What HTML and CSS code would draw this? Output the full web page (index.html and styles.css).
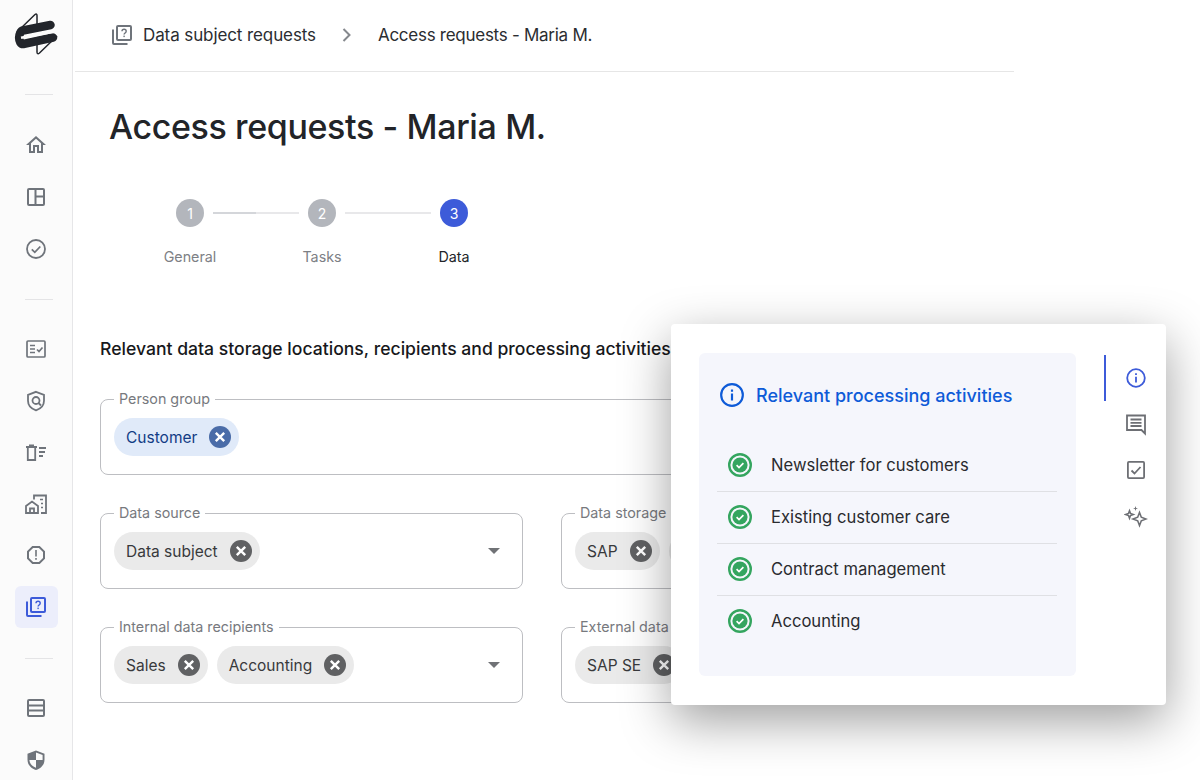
FILE: index.html
```html
<!DOCTYPE html>
<html>
<head>
	<meta charset="UTF-8">
	<title>Access requests - Maria M.</title>
	<link rel="stylesheet" href="styles.css">
</head>
<body>
	<svg class="sprite" width="0" height="0">
		<symbol id="quiz" viewBox="0 0 24 24">
			<path d="M3 6.5V20a1 1 0 0 0 1 1h13.5" fill="none" stroke="currentColor" stroke-width="2"/>
			<rect x="7" y="3" width="14" height="14" rx="1" fill="none" stroke="currentColor" stroke-width="2"/>
			<path d="M12 8.2c0-2.6 4.2-2.6 4.2 0 0 1.8-2.1 1.7-2.1 3.4" fill="none" stroke="currentColor" stroke-width="1.4"/>
			<rect x="13.4" y="12.6" width="1.4" height="1.5" fill="currentColor"/>
		</symbol>
		<symbol id="close" viewBox="0 0 22 22">
			<circle cx="11" cy="11" r="11" fill="currentColor"/>
			<path d="M6.8 6.8l8.4 8.4M15.2 6.8l-8.4 8.4" stroke="#fff" stroke-width="2.4"/>
		</symbol>
		<symbol id="done" viewBox="0 0 24 24">
			<circle cx="12" cy="12" r="10.8" fill="none" stroke="#34a55f" stroke-width="2.4"/>
			<circle cx="12" cy="12" r="7.6" fill="#34a55f"/>
			<path d="M8.6 12.2l2.4 2.3 4.4-4.4" fill="none" stroke="#fff" stroke-width="1.7"/>
		</symbol>
	</svg>

	<div class="page">
		<aside class="sidebar">
			<svg class="logo" width="44" height="44" viewBox="14 13 44 44">
				<path d="M35 14.500L17 32M35 14.500c1.200-1 2-.5 2 1V24M37 41V52c0 1.800 1 2.200 2.500 1L57 36" fill="none" stroke="#22252b" stroke-width="1.500"/>
				<path d="M50.500 25L23 30.500c-5 1-5.500 13.800.5 13.500L53 37.500" fill="none" stroke="#22252b" stroke-width="8.500" stroke-linecap="round"/>
				<path d="M21 37.800L59 30.800" stroke="#fbfbfb" stroke-width="2.600"/>
			</svg>

			<hr class="side-rule">
			<nav class="side-group">
				<a class="side-item"><svg width="24" height="24" viewBox="0 0 24 24" fill="currentColor"><path d="M12 5.690l5 4.500V18h-2v-6H9v6H7v-7.810l5-4.500M12 3L2 12h3v8h6v-6h2v6h6v-8h3L12 3z"/></svg></a>
				<a class="side-item"><svg width="24" height="24" viewBox="0 0 24 24" fill="none" stroke="currentColor" stroke-width="2"><rect x="4" y="4" width="16" height="16" rx="1"/><path d="M11.500 4v16M11.500 11.500H20"/></svg></a>
				<a class="side-item"><svg width="24" height="24" viewBox="0 0 24 24" fill="none" stroke="currentColor" stroke-width="1.800"><circle cx="12" cy="12" r="9"/><path d="M7.800 12.300l3 3 5.500-5.800"/></svg></a>
			</nav>

			<hr class="side-rule">
			<nav class="side-group tight">
				<a class="side-item"><svg width="24" height="24" viewBox="0 0 24 24" fill="none" stroke="currentColor" stroke-width="1.700"><rect x="3" y="4" width="18" height="16" rx="1"/><path d="M6 8.500h5M6 12h5M6 15.500h5M13 12.500l2 2 3.500-4"/></svg></a>
				<a class="side-item"><svg width="24" height="24" viewBox="0 0 24 24" fill="none" stroke="currentColor" stroke-width="1.800"><path d="M12 2.800l8 3v6c0 4.800-3.200 8-8 9.600-4.800-1.600-8-4.800-8-9.600v-6z"/><circle cx="12" cy="11.500" r="3.500"/><path d="M14.500 14l2.500 2.500"/></svg></a>
				<a class="side-item"><svg width="24" height="24" viewBox="0 0 24 24" fill="none" stroke="currentColor" stroke-width="1.800"><path d="M2 7h11M5 5.500h5M3.800 7v13h7.400V7M15 8h7M15 12h6M15 16h4"/></svg></a>
				<a class="side-item"><svg width="24" height="24" viewBox="0 0 24 24" fill="none" stroke="currentColor" stroke-width="1.800"><path d="M2 21V14l6-4.500 6 4.500v7zM6 21v-4.500h4V21M10 7.500V3.500h12V21h-5"/><path d="M16 7.500h3M17 11.500h2M17 15.500h2" stroke-width="1.600"/></svg></a>
				<a class="side-item"><svg width="24" height="24" viewBox="0 0 24 24" fill="currentColor"><path d="M15.730 3H8.270L3 8.270v7.460L8.270 21h7.460L21 15.730V8.270L15.730 3zM19 14.900L14.900 19H9.100L5 14.900V9.100L9.100 5h5.800L19 9.100v5.800z"/><rect x="11.200" y="7" width="1.600" height="6.500"/><rect x="11.200" y="15" width="1.600" height="1.800"/></svg></a>
				<a class="side-item active"><svg width="24" height="24"><use href="#quiz"/></svg></a>
			</nav>

			<hr class="side-rule">
			<nav class="side-group bottom">
				<a class="side-item"><svg width="24" height="24" viewBox="0 0 24 24" fill="none" stroke="currentColor" stroke-width="2"><rect x="4" y="4" width="16" height="16" rx="1"/><path d="M4 9.500h16M4 14.500h16"/></svg></a>
				<a class="side-item"><svg width="24" height="24" viewBox="0 0 24 24" fill="currentColor"><path d="M12 2.500l8.500 3.200v6c0 5-3.500 8.700-8.500 10.300-5-1.600-8.500-5.300-8.500-10.300v-6zM12 4.600v7.400H5.400c.3 3.800 3 6.500 6.600 7.800V12h6.600V7z"/></svg></a>
			</nav>
		</aside>

		<main class="main">
			<header class="crumbs">
				<svg class="crumb-icon" width="24" height="24"><use href="#quiz"/></svg>
				<span class="crumb-parent">Data subject requests</span>
				<svg class="crumb-sep" width="12" height="16" viewBox="0 0 12 16" fill="none" stroke="currentColor" stroke-width="2"><path d="M2.500 2l6 6-6 6"/></svg>
				<span class="crumb-current">Access requests - Maria M.</span>
			</header>

			<h1 class="title">Access requests - Maria M.</h1>

			<div class="stepper">
				<div class="step-track">
					<span class="step-dot">1</span>
					<span class="step-line half"></span>
					<span class="step-dot">2</span>
					<span class="step-line"></span>
					<span class="step-dot current">3</span>
				</div>
				<div class="step-labels">
					<span>General</span>
					<span>Tasks</span>
					<span class="current">Data</span>
				</div>
			</div>

			<h2 class="section-title">Relevant data storage locations, recipients and processing activities</h2>

			<div class="fields">
				<fieldset class="field wide">
					<legend>Person group</legend>
					<span class="chip blue">Customer <svg width="22" height="22"><use href="#close"/></svg></span>
				</fieldset>

				<fieldset class="field">
					<legend>Data source</legend>
					<span class="chip">Data subject <svg width="22" height="22"><use href="#close"/></svg></span>
					<span class="arrow"></span>
				</fieldset>
				<fieldset class="field">
					<legend>Data storage</legend>
					<span class="chip">SAP <svg width="22" height="22"><use href="#close"/></svg></span>
					<span class="chip">Cloud <svg width="22" height="22"><use href="#close"/></svg></span>
					<span class="arrow"></span>
				</fieldset>

				<fieldset class="field">
					<legend>Internal data recipients</legend>
					<span class="chip">Sales <svg width="22" height="22"><use href="#close"/></svg></span>
					<span class="chip">Accounting <svg width="22" height="22"><use href="#close"/></svg></span>
					<span class="arrow"></span>
				</fieldset>
				<fieldset class="field">
					<legend>External data recipients</legend>
					<span class="chip">SAP SE <svg width="22" height="22"><use href="#close"/></svg></span>
					<span class="arrow"></span>
				</fieldset>
			</div>
		</main>
	</div>

	<section class="popup">
		<div class="popup-panel">
			<div class="popup-head">
				<svg width="26" height="26" viewBox="0 0 24 24" fill="none" stroke="currentColor" stroke-width="2"><circle cx="12" cy="12" r="10"/><path d="M12 10.500V17M12 7v2"/></svg>
				<span>Relevant processing activities</span>
			</div>
			<ul class="activity-list">
				<li><svg width="24" height="24"><use href="#done"/></svg>Newsletter for customers</li>
				<li><svg width="24" height="24"><use href="#done"/></svg>Existing customer care</li>
				<li><svg width="24" height="24"><use href="#done"/></svg>Contract management</li>
				<li><svg width="24" height="24"><use href="#done"/></svg>Accounting</li>
			</ul>
		</div>
		<div class="popup-rail">
			<a class="rail-item active"><svg width="24" height="24" viewBox="0 0 24 24" fill="none" stroke="currentColor" stroke-width="1.800"><circle cx="12" cy="12" r="8.800"/><path d="M12 10.800V16.500M12 7.200V9"/></svg></a>
			<a class="rail-item"><svg width="24" height="24" viewBox="0 0 24 24" fill="none" stroke="currentColor" stroke-width="1.800"><path d="M3 3.500h18v18l-3.500-3.500H3z"/><path d="M6.500 7.500h11M6.500 10.800h11M6.500 14h11"/></svg></a>
			<a class="rail-item"><svg width="24" height="24" viewBox="0 0 24 24" fill="none" stroke="currentColor" stroke-width="1.800"><rect x="3.900" y="3.900" width="16.200" height="16.200" rx="1"/><path d="M7.500 12.500l3 3 6-6.500"/></svg></a>
			<a class="rail-item"><svg width="24" height="24" viewBox="0 0 24 24" fill="none" stroke="currentColor" stroke-width="1.600"><path d="M15.500 8.500l1.800 4.700 4.700 1.800-4.700 1.800-1.800 4.700-1.800-4.700L9 15l4.700-1.800z"/><path d="M5.500 6.800l1 2.700 2.700 1-2.700 1-1 2.700-1-2.700-2.700-1 2.700-1z"/><path d="M11.500 2l.6 1.900 1.900.6-1.900.6-.6 1.900-.6-1.900L9 4.500l1.900-.6z" fill="currentColor" stroke="none"/></svg></a>
		</div>
	</section>
</body>
</html>
```

FILE: styles.css
```css
body {
	margin: 0;
	background: #fff;
	color: #222428;
	font-family: Inter, "Liberation Sans", sans-serif;
	height: 780px;
	overflow: hidden;
}
.sprite {
	position: absolute;
}
.page {
	display: flex;
	height: 780px;
}

/* sidebar */
.sidebar {
	flex: 0 0 72px;
	background: #fbfbfb;
	border-right: 1px solid #e6e6e8;
	display: flex;
	flex-direction: column;
	align-items: center;
}
.logo {
	margin-top: 13px;
	margin-bottom: 37px;
	flex: none;
}
.side-rule {
	width: 28px;
	height: 1px;
	border: none;
	background: #e4e4e6;
	margin: 0 0 0 6px;
	flex: none;
}
.side-group {
	display: flex;
	flex-direction: column;
	gap: 10px;
	margin: 29px 0;
}
.side-group.tight {
	gap: 9.6px;
	margin: 28px 0 30px;
}
.side-group.bottom {
	margin-top: 28px;
}
.side-item {
	width: 43px;
	height: 42px;
	border-radius: 6px;
	display: flex;
	align-items: center;
	justify-content: center;
	color: #6f747b;
	flex: none;
}
.side-item.active {
	background: #eceefb;
	color: #3d5bd9;
}

/* main column */
.main {
	flex: 1;
	padding-left: 2px;
	min-width: 0;
}
.crumbs {
	width: 939px;
	height: 72px;
	border-bottom: 1px solid #e6e6e6;
	display: flex;
	align-items: center;
	padding: 0 0 1px 35px;
	box-sizing: border-box;
	font-size: 17px;
	color: #2b2d31;
}
.crumb-parent {
	letter-spacing: -0.1px;
}
.crumb-current {
	letter-spacing: -0.27px;
}
.crumb-icon {
	color: #6f747b;
	margin-right: 9px;
}
.crumb-sep {
	color: #85888d;
	margin: 0 25px;
}
.title {
	margin: 33px 0 0 34px;
	font-size: 34px;
	line-height: 44px;
	font-weight: 500;
	letter-spacing: -0.38px;
	color: #222428;
}
.stepper {
	margin-top: 50px;
}
.step-track {
	display: flex;
	align-items: center;
	margin-left: 101px;
}
.step-dot {
	width: 28px;
	height: 28px;
	border-radius: 50%;
	background: #b3b6bc;
	color: #fff;
	font-size: 14px;
	display: flex;
	align-items: center;
	justify-content: center;
	flex: none;
}
.step-dot.current {
	background: #3d5bd9;
}
.step-line {
	width: 86px;
	height: 2px;
	margin: 0 9px;
	background: #e8e8ea;
}
.step-line.half {
	background: linear-gradient(90deg, #d4d6da 50%, #e8e8ea 50%);
}
.step-labels {
	display: flex;
	margin: 21px 0 0 49px;
	font-size: 14.300px;
	line-height: 18px;
	color: #7d8085;
}
.step-labels span {
	width: 132px;
	text-align: center;
}
.step-labels .current {
	color: #222428;
}
.section-title {
	margin: 72px 0 0 25px;
	font-size: 17.600px;
	line-height: 22px;
	font-weight: 500;
	color: #17181b;
	white-space: nowrap;
}

/* form fields */
.fields {
	display: grid;
	grid-template-columns: 423px 423px;
	column-gap: 38px;
	row-gap: 29px;
	margin: 30px 0 0 25px;
}
.field {
	margin: 0;
	height: 85px;
	box-sizing: border-box;
	border: 1px solid #bdbec2;
	border-radius: 8px;
	padding: 0 13px 8px;
	display: flex;
	align-items: center;
	gap: 9px;
	min-width: 0;
}
.field.wide {
	grid-column: 1 / span 2;
}
.field legend {
	font-size: 14.300px;
	line-height: 18px;
	color: #77797e;
	padding: 0 5px;
	margin-left: 0;
}
.chip {
	display: inline-flex;
	align-items: center;
	gap: 12px;
	height: 38px;
	border-radius: 19px;
	padding: 0 8px 0 12px;
	background: #eaeaea;
	color: #38393c;
	font-size: 15.500px;
	white-space: nowrap;
	flex: none;
}
.chip svg {
	color: #606163;
}
.chip.blue {
	background: #e0eaf9;
	color: #123c85;
}
.chip.blue svg {
	color: #4a6ca8;
}
.arrow {
	margin-left: auto;
	margin-right: 9px;
	border-left: 6px solid transparent;
	border-right: 6px solid transparent;
	border-top: 6px solid #707276;
}

/* floating panel */
.popup {
	position: absolute;
	left: 671px;
	top: 324px;
	width: 495px;
	height: 381px;
	box-sizing: border-box;
	padding: 29px 0 29px 28px;
	background: #fff;
	border-radius: 4px;
	box-shadow: 0 16px 50px rgba(0, 0, 0, 0.38);
	display: flex;
}
.popup-panel {
	width: 377px;
	background: #f5f6fc;
	border-radius: 6px;
	box-sizing: border-box;
	padding: 28px 19px 0 18px;
}
.popup-head {
	display: flex;
	align-items: center;
	gap: 11px;
	margin-left: 2px;
	color: #0e5bd8;
	font-size: 18px;
	font-weight: 500;
	height: 28px;
}
.activity-list {
	list-style: none;
	margin: 31px 0 0;
	padding: 0;
}
.activity-list li {
	height: 52px;
	box-sizing: border-box;
	border-bottom: 1px solid #dfe0e4;
	display: flex;
	align-items: center;
	gap: 19px;
	padding: 0 0 2px 11px;
	font-size: 16.600px;
	color: #2a2b2f;
}
.activity-list li:last-child {
	border-bottom: none;
}
.popup-rail {
	margin-left: 28px;
	display: flex;
	flex-direction: column;
	width: 62px;
}
.rail-item {
	height: 46px;
	display: flex;
	align-items: center;
	justify-content: center;
	color: #6d6f74;
	border-left: 2px solid transparent;
}
.rail-item.active {
	border-left-color: #3d5bd9;
	color: #3d5bd9;
	margin-top: 2px;
}
```
